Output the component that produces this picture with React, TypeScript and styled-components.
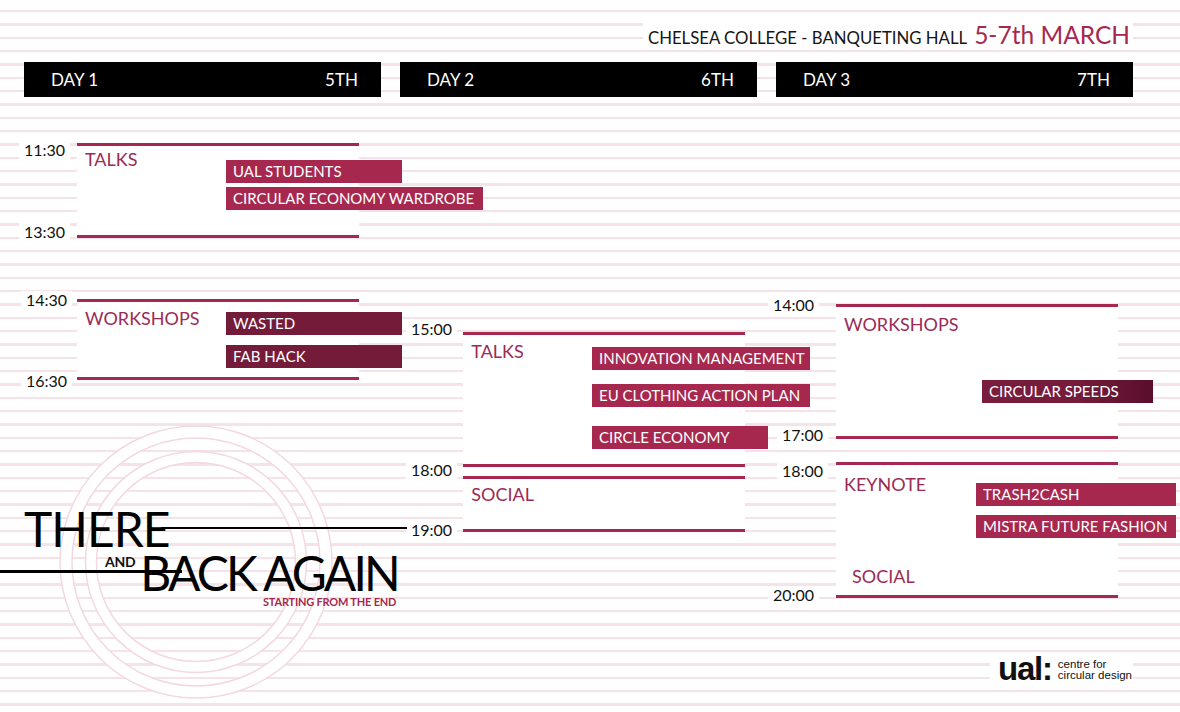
import React from 'react';
import styled, { createGlobalStyle } from 'styled-components';

const PINK = '#a6284f';
const TITLE = '#9c2b55';
const WINE = '#741b3a';

const GlobalStyle = createGlobalStyle`
  html, body { margin: 0; padding: 0; background: #fff; }
  body { font-family: Lato, 'Open Sans', sans-serif; color: #111; }
`;

type Mark = { time: string; shift?: number; indent?: number };
type Tag = { label: string; width: number; tone?: 'pink' | 'wine' | 'fade'; gap?: number };
type Session = {
  top: number;
  height: number;
  start?: Mark;
  end?: Mark;
  title: string;
  titleTop: number;
  tagOffset: number;
  tagTop?: number;
  tags?: Tag[];
  footer?: string;
};
type Day = { label: string; date: string; rail: number; sessions: Session[] };

const days: Day[] = [
  {
    label: 'DAY 1',
    date: '5TH',
    rail: 53,
    sessions: [
      {
        top: 45.5, height: 95,
        start: { time: '11:30', shift: 6 }, end: { time: '13:30', shift: -4 },
        title: 'TALKS', titleTop: 4.5, tagOffset: 149, tagTop: 14.5,
        tags: [
          { label: 'UAL STUDENTS', width: 176 },
          { label: 'CIRCULAR ECONOMY WARDROBE', width: 257, gap: 4.3 },
        ],
      },
      {
        top: 61.7, height: 81.3,
        start: { time: '14:30', shift: -1, indent: 2 }, end: { time: '16:30', shift: 2, indent: 2 },
        title: 'WORKSHOPS', titleTop: 6.5, tagOffset: 149, tagTop: 10,
        tags: [
          { label: 'WASTED', width: 176, tone: 'wine' },
          { label: 'FAB HACK', width: 176, tone: 'wine', gap: 10 },
        ],
      },
    ],
  },
  {
    label: 'DAY 2',
    date: '6TH',
    rail: 63.3,
    sessions: [
      {
        top: 234.8, height: 135.4,
        start: { time: '15:00', shift: -4, indent: 11 }, end: { time: '18:00', shift: 4, indent: 11 },
        title: 'TALKS', titleTop: 7.2, tagOffset: 128.7, tagTop: 12,
        tags: [
          { label: 'INNOVATION MANAGEMENT', width: 218 },
          { label: 'EU CLOTHING ACTION PLAN', width: 218, gap: 14.3 },
          { label: 'CIRCLE ECONOMY', width: 176, gap: 19 },
        ],
      },
      {
        top: 9, height: 56,
        end: { time: '19:00', shift: -1, indent: 11 },
        title: 'SOCIAL', titleTop: 5.8, tagOffset: 128.7,
      },
    ],
  },
  {
    label: 'DAY 3',
    date: '7TH',
    rail: 60,
    sessions: [
      {
        top: 207.2, height: 134.6,
        start: { time: '14:00', shift: -1, indent: -3 }, end: { time: '17:00', shift: -2, indent: 6 },
        title: 'WORKSHOPS', titleTop: 7.8, tagOffset: 146, tagTop: 73,
        tags: [{ label: 'CIRCULAR SPEEDS', width: 171, tone: 'fade' }],
      },
      {
        top: 23.4, height: 136,
        start: { time: '18:00', shift: 7, indent: 6 }, end: { time: '20:00', shift: -2, indent: -3 },
        title: 'KEYNOTE', titleTop: 9.5, tagOffset: 140, tagTop: 17.5,
        tags: [
          { label: 'TRASH2CASH', width: 200 },
          { label: 'MISTRA FUTURE FASHION', width: 200, gap: 9.3 },
        ],
        footer: 'SOCIAL',
      },
    ],
  },
];

const Page = styled.div`
  position: relative;
  width: 1180px;
  height: 712px;
  overflow: hidden;
  display: flex;
  flex-direction: column;
  background: repeating-linear-gradient(
    180deg,
    #fff 0 10px,
    #f6e3e9 10px 12.4px,
    #fff 12.4px 13.3333px
  );
`;

const Header = styled.header`
  height: 62px;
  box-sizing: border-box;
  display: flex;
  justify-content: flex-end;
  align-items: flex-start;
  padding: 22px 47px 0 0;
`;

const Venue = styled.div`
  display: flex;
  align-items: baseline;
  gap: 7px;
  background: #fff;
  padding: 0 3px 1px 5px;
`;

const Place = styled.span`
  font-size: 16.75px;
  line-height: 20px;
  color: #151515;
`;

const Dates = styled.span`
  font-size: 24.5px;
  line-height: 26px;
  color: ${PINK};
`;

const DayRow = styled.div`
  display: grid;
  grid-template-columns: repeat(3, 357px);
  column-gap: 19px;
  padding-left: 24px;
  height: 35px;
`;

const DayBar = styled.div`
  background: #000;
  color: #fff;
  display: flex;
  justify-content: space-between;
  align-items: center;
  padding: 0 23px 0 27px;
  font-size: 17px;
`;

const Schedule = styled.main`
  display: grid;
  grid-template-columns: repeat(3, 357px);
  column-gap: 19px;
  align-items: start;
  padding-left: 24px;
  height: 558px;
`;

const Column = styled.section`
  display: flex;
  flex-direction: column;
`;

const SessionRow = styled.div<{ $top: number }>`
  display: flex;
  margin-top: ${(p) => p.$top}px;
`;

const Rail = styled.div<{ $w: number }>`
  width: ${(p) => p.$w}px;
  flex: none;
  display: flex;
  flex-direction: column;
  justify-content: space-between;
`;

const Time = styled.span<{ $indent: number; $shift: number; $end?: boolean }>`
  align-self: flex-start;
  height: 18px;
  line-height: 18px;
  font-size: 16px;
  color: #111;
  background: #fff;
  padding: 0 5px;
  margin-left: ${(p) => p.$indent - 5}px;
  ${(p) =>
    p.$end
      ? `margin-bottom: ${-7.5 - p.$shift}px;`
      : `margin-top: ${-7.5 + p.$shift}px;`}
`;

const Block = styled.div<{ $h: number }>`
  width: 282px;
  height: ${(p) => p.$h}px;
  box-sizing: border-box;
  background: #fff;
  border-top: 3px solid ${PINK};
  border-bottom: 3px solid ${PINK};
  display: flex;
  flex-direction: column;
`;

const BlockMain = styled.div`
  display: flex;
`;

const Title = styled.div<{ $w: number; $top: number }>`
  width: ${(p) => p.$w}px;
  flex: none;
  box-sizing: border-box;
  padding: ${(p) => p.$top}px 0 0 8px;
  font-size: 18px;
  line-height: 18px;
  color: ${TITLE};
`;

const FootTitle = styled.div`
  margin-top: auto;
  padding: 0 0 10px 16px;
  font-size: 18px;
  line-height: 18px;
  color: ${TITLE};
`;

const Tags = styled.div<{ $top: number }>`
  display: flex;
  flex-direction: column;
  padding-top: ${(p) => p.$top}px;
`;

const tagBg = {
  pink: PINK,
  wine: WINE,
  fade: `linear-gradient(90deg, #7a1d3e 0%, #761b3c 55%, #5a0e2b 100%)`,
};

const TagBox = styled.div<{ $w: number; $tone: 'pink' | 'wine' | 'fade'; $gap: number }>`
  width: ${(p) => p.$w}px;
  height: 23px;
  box-sizing: border-box;
  margin-top: ${(p) => p.$gap}px;
  padding-left: 7px;
  line-height: 23px;
  font-size: 15px;
  color: #fff;
  white-space: nowrap;
  background: ${(p) => tagBg[p.$tone]};
`;

const Logo = styled.div`
  position: relative;
  margin: 124.5px 0 0 -24px;
  width: 410px;
`;

const Rings = styled.svg`
  position: absolute;
  left: 56px;
  top: -83px;
  width: 280px;
  height: 280px;
  z-index: 0;
`;

const ThereRow = styled.div`
  position: relative;
  z-index: 1;
  display: flex;
  align-items: center;
  height: 48px;
  padding-left: 24px;
`;

const BigWord = styled.span<{ $track: number; $lh: number }>`
  font-size: 48px;
  line-height: ${(p) => p.$lh}px;
  font-weight: 400;
  letter-spacing: ${(p) => p.$track}px;
  color: #000;
  white-space: nowrap;
`;

const Rule = styled.span`
  width: 246px;
  height: 2.5px;
  margin: -2px 0 0 -9px;
  background: #000;
`;

const BackRow = styled.div`
  position: relative;
  z-index: 1;
  display: flex;
  align-items: flex-start;
  height: 44px;
  margin-top: -2.2px;
  padding-left: 105px;
  &::before {
    content: '';
    position: absolute;
    left: 0;
    top: 19.6px;
    width: 182px;
    height: 2.5px;
    background: #000;
  }
`;

const And = styled.span`
  margin: 3.7px 5px 0 0;
  font-size: 14px;
  line-height: 15px;
  font-weight: 700;
  letter-spacing: -0.3px;
`;

const Tagline = styled.div`
  position: relative;
  z-index: 1;
  margin-top: 1.5px;
  padding-left: 263px;
  font-size: 11px;
  line-height: 12px;
  font-weight: 700;
  letter-spacing: -0.2px;
  color: ${PINK};
  white-space: nowrap;
`;

const Footer = styled.footer`
  display: flex;
  justify-content: flex-end;
  padding-right: 47px;
`;

const UalBox = styled.div`
  display: flex;
  align-items: center;
  gap: 6px;
  height: 31px;
  padding: 0 1px 0 8px;
  background: #fff;
  font-family: 'Liberation Sans', Arial, sans-serif;
`;

const Ual = styled.span`
  font-size: 33px;
  line-height: 28px;
  font-weight: 700;
  letter-spacing: -1.2px;
  margin-top: -3px;
`;

const UalSub = styled.span`
  font-size: 11.5px;
  line-height: 11px;
  margin-top: -1px;
`;

const TimeSlot: React.FC<{ mark?: Mark; end?: boolean }> = ({ mark, end }) =>
  mark ? (
    <Time $indent={mark.indent ?? 0} $shift={mark.shift ?? 0} $end={end}>
      {mark.time}
    </Time>
  ) : (
    <span />
  );

const SessionView: React.FC<{ s: Session; rail: number }> = ({ s, rail }) => (
  <SessionRow $top={s.top}>
    <Rail $w={rail}>
      <TimeSlot mark={s.start} />
      <TimeSlot mark={s.end} end />
    </Rail>
    <Block $h={s.height}>
      <BlockMain>
        <Title $w={s.tagOffset} $top={s.titleTop}>{s.title}</Title>
        {s.tags && (
          <Tags $top={s.tagTop ?? 0}>
            {s.tags.map((t) => (
              <TagBox key={t.label} $w={t.width} $tone={t.tone ?? 'pink'} $gap={t.gap ?? 0}>
                {t.label}
              </TagBox>
            ))}
          </Tags>
        )}
      </BlockMain>
      {s.footer && <FootTitle>{s.footer}</FootTitle>}
    </Block>
  </SessionRow>
);

const RingArt = () => (
  <Rings viewBox="0 0 280 280">
    <g fill="none">
      <circle cx="140" cy="140" r="130" stroke="#fff" strokeWidth="12" />
      <circle cx="140" cy="140" r="105" stroke="#fff" strokeWidth="11" />
      {[99.5, 110.5, 124, 136].map((r) => (
        <circle key={r} cx="140" cy="140" r={r} stroke="#f3d8e0" strokeWidth="1.5" />
      ))}
    </g>
  </Rings>
);

const App: React.FC = () => (
  <>
    <GlobalStyle />
    <Page>
      <Header>
        <Venue>
          <Place>CHELSEA COLLEGE - BANQUETING HALL</Place>
          <Dates>5-7th MARCH</Dates>
        </Venue>
      </Header>
      <DayRow>
        {days.map((d) => (
          <DayBar key={d.label}>
            <span>{d.label}</span>
            <span>{d.date}</span>
          </DayBar>
        ))}
      </DayRow>
      <Schedule>
        {days.map((d, i) => (
          <Column key={d.label}>
            {d.sessions.map((s) => (
              <SessionView key={s.title + s.top} s={s} rail={d.rail} />
            ))}
            {i === 0 && (
              <Logo>
                <RingArt />
                <ThereRow>
                  <BigWord $track={-1} $lh={48}>THERE</BigWord>
                  <Rule />
                </ThereRow>
                <BackRow>
                  <And>AND</And>
                  <BigWord $track={-2.8} $lh={44}>BACK AGAIN</BigWord>
                </BackRow>
                <Tagline>STARTING FROM THE END</Tagline>
              </Logo>
            )}
          </Column>
        ))}
      </Schedule>
      <Footer>
        <UalBox>
          <Ual>ual:</Ual>
          <UalSub>
            centre for
            <br />
            circular design
          </UalSub>
        </UalBox>
      </Footer>
    </Page>
  </>
);

export default App;
